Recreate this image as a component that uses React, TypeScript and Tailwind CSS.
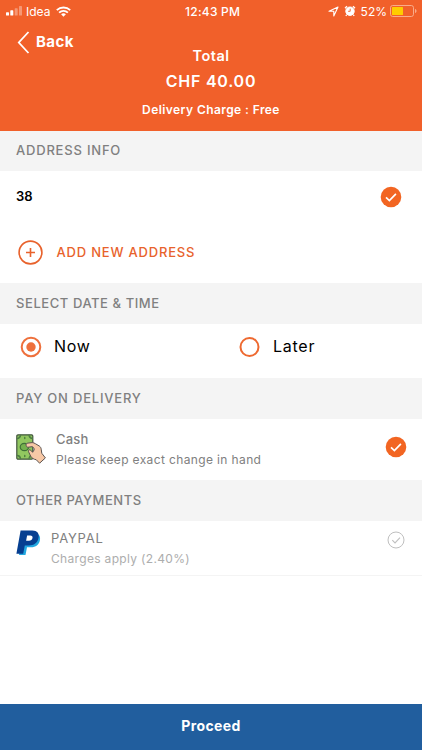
import type { ReactNode } from "react";

function SectionTitle({ children }: { children: ReactNode }) {
  return (
    <h2 className="flex h-full items-center bg-[#f4f4f4] pb-0.5 pl-4 text-[13px] leading-4 font-medium text-[#808080]">
      {children}
    </h2>
  );
}

function CheckBadge() {
  return (
    <svg width="22" height="22" viewBox="0 0 22 22" fill="none">
      <circle cx="11" cy="11" r="10.3" fill="#f26522" />
      <path d="M6 11.3l3.4 3.2 6.5-6.7" stroke="#fff" strokeWidth="1.7" />
    </svg>
  );
}

function StatusBar() {
  return (
    <div className="flex h-[22px] items-center pl-1.5 text-[12px] leading-none">
      <div className="flex w-[179px] items-center">
        <svg width="17" height="10" viewBox="0 0 17 10" fill="#fff">
          <rect x="0" y="6.2" width="3" height="3.3" rx=".6" />
          <rect x="4.3" y="4.3" width="3" height="5.2" rx=".6" />
          <rect x="8.7" y="2.3" width="3" height="7.2" rx=".6" opacity=".35" />
          <rect x="13" y="0" width="3" height="9.5" rx=".6" opacity=".35" />
        </svg>
        <span className="ml-[3px] pt-px">Idea</span>
        <svg className="ml-[6px]" width="15" height="11" viewBox="0 0 15 11" fill="none" stroke="#fff" strokeWidth="1.8">
          <path d="M.8 4.2a9.6 9.6 0 0 1 13.4 0M3.1 6.6a6.3 6.3 0 0 1 8.8 0" />
          <path d="M5.1 8.3a3.5 3.5 0 0 1 4.8 0L7.5 10.8z" fill="#fff" stroke="none" />
        </svg>
      </div>
      <span className="w-[60px] pt-px font-medium tracking-[0.25px] whitespace-nowrap">12:43 PM</span>
      <div className="ml-auto flex items-center pr-[5px]">
        <svg width="11" height="11" viewBox="0 0 11 11" fill="none" stroke="#fff" strokeWidth="1.1" strokeLinejoin="round">
          <path d="M1 5.3L10 1 5.8 10V5.3z" />
        </svg>
        <svg className="ml-[5px]" width="12" height="12" viewBox="0 0 12 12" fill="none" stroke="#fff">
          <circle cx="6" cy="6.2" r="4.2" fill="#fff" />
          <path d="M1 3.2L3 1.2M11 3.2L9 1.2M2.8 9.6l-1 1.2M9.2 9.6l1 1.2" strokeWidth="1.3" />
          <path d="M6.2 3.7v2.6H4.1" stroke="#f0602a" strokeWidth=".9" />
        </svg>
        <span className="ml-[5px] pt-px">52%</span>
        <svg className="ml-[3px]" width="27" height="12" viewBox="0 0 27 12">
          <rect x=".5" y=".5" width="23" height="11" rx="2.2" fill="none" stroke="#f9ac8a" />
          <rect x="2" y="2" width="11" height="8" rx=".5" fill="#ffcc00" />
          <path d="M25 4v4c2-.6 2-3.4 0-4z" fill="#f9ac8a" />
        </svg>
      </div>
    </div>
  );
}

function CashIcon() {
  return (
    <svg width="30" height="31" viewBox="0 0 30 31" strokeWidth="1.2" strokeLinejoin="round">
      <rect x=".8" y=".8" width="16" height="24.4" rx="1.2" fill="#91c760" stroke="#42553f" />
      <path
        d="M.8 4.6C3 4.6 4.6 3 4.6.8M13 .8c0 2.2 1.6 3.8 3.8 3.8M.8 21.4c2.2 0 3.8 1.6 3.8 3.8M13 25.2c0-2.2 1.6-3.8 3.8-3.8"
        fill="#609c4b"
        stroke="#4d7c42"
      />
      <ellipse cx="8.4" cy="13" rx="4.2" ry="3.7" fill="#75b14e" stroke="#3f7038" />
      <path d="M8.8 3.4v1.2M8.8 21.4v1.2" stroke="#3f7038" strokeLinecap="round" />
      <path
        d="M10.2 11.6c-.5-1.4.3-2.2 1.7-2.5l4.3-.5c1.2 0 2.2.5 3.2 1.1l3.9 2.3c1.2.8 1.7 1.9 1.9 3.2l.6 4.1 3.6 4.6-5.8 5.3-3.4-3.5c-2.3-.3-4.4-1.5-5.5-3.5l-2.1-4.4c-.7-1.7 1-2.7 2.2-1.5l1.8 2 1.5-2.3c.3-1.7-.6-2.9-2-3.3l-3.9.5c-1 .1-1.7-.4-2-1.6z"
        fill="#f7c8a6"
        stroke="#5b5350"
        strokeWidth="1"
      />
    </svg>
  );
}

function PaypalIcon() {
  return (
    <svg width="25" height="26" viewBox="0 0 25 26">
      <path d="M7.2 3.5h11.3c4.3 0 6.3 2.6 5.4 6.8-.9 4.7-4.1 7-8.9 7h-4l-1.5 7.6H3z" fill="#23a8e0" />
      <path d="M4.6.6h11.7c5 0 7.2 3 6.2 7.5-1 5-4.5 7.4-9.6 7.4H8.8l-1.6 8.2H.4z" fill="#063f91" />
      <path d="M11.1 5.6h3.1c1.8 0 2.7.9 2.3 2.5-.4 1.9-1.6 2.7-3.5 2.7h-2.9z" fill="#fff" />
    </svg>
  );
}

export default function App() {
  return (
    <div className="grid h-[750px] w-[422px] grid-rows-[131px_40px_112px_41px_54px_41px_61px_41px_55px_1fr_46px] overflow-hidden bg-white font-['Inter',sans-serif]">
      <header className="bg-[#f1602a] text-white">
        <StatusBar />
        <div className="flex h-[22px] items-start pt-[9px] pl-[17px]">
          <svg width="13" height="23" viewBox="0 0 13 23" fill="none" stroke="#fff" strokeWidth="1.8">
            <path d="M11.5 1L1.8 11.5 11.5 22" />
          </svg>
          <button className="ml-1.5 text-[15px] leading-[22px] font-bold tracking-[0.4px]">Back</button>
        </div>
        <div className="flex flex-col items-center">
          <span className="mt-[2px] text-[14.5px] leading-5 font-semibold tracking-[0.5px]">Total</span>
          <span className="mt-[5px] text-[16px] leading-5 font-semibold tracking-[0.75px]">CHF 40.00</span>
          <span className="mt-[11px] text-[12px] leading-4 font-semibold tracking-[0.42px]">Delivery Charge : Free</span>
        </div>
      </header>

      <SectionTitle><span className="tracking-[0.8px]">ADDRESS INFO</span></SectionTitle>
      <div>
        <div className="flex h-[52px] items-center justify-between pr-5 pl-4">
          <span className="text-[13px] font-semibold text-black">38</span>
          <CheckBadge />
        </div>
        <button className="flex h-[58px] items-center pl-[18px] text-[#e8622c]">
          <svg width="25" height="25" viewBox="0 0 25 25" fill="none" stroke="#e8622c">
            <circle cx="12.5" cy="12.5" r="11.4" strokeWidth="1.6" />
            <path d="M12.5 8v9M8 12.5h9" strokeWidth="1.6" />
          </svg>
          <span className="ml-[13.5px] pt-0.5 text-[13px] font-medium tracking-[0.8px]">ADD NEW ADDRESS</span>
        </button>
      </div>

      <SectionTitle><span className="tracking-[0.57px]">SELECT DATE & TIME</span></SectionTitle>
      <div className="flex h-[45px] items-center pl-5 text-[16px] text-black">
        <label className="flex w-[219px] items-center">
          <svg width="22" height="22" viewBox="0 0 22 22">
            <circle cx="11" cy="11" r="9.3" fill="none" stroke="#ee703c" strokeWidth="2" />
            <circle cx="11" cy="11" r="4.7" fill="#ee703c" />
          </svg>
          <span className="ml-3 pb-0.5 tracking-[0.7px]">Now</span>
        </label>
        <label className="flex items-center">
          <svg width="22" height="22" viewBox="0 0 22 22">
            <circle cx="10.5" cy="11" r="9" fill="none" stroke="#ee6930" strokeWidth="2" />
          </svg>
          <span className="ml-3 pb-0.5 tracking-[0.75px]">Later</span>
        </label>
      </div>

      <SectionTitle><span className="tracking-[0.8px]">PAY ON DELIVERY</span></SectionTitle>
      <div className="flex items-center pr-[15px] pl-4">
        <CashIcon />
        <div className="ml-2.5 flex-1 text-[#808080]">
          <p className="text-[13px] leading-5 font-medium tracking-[0.2px]">Cash</p>
          <p className="pt-px text-[12px] leading-5 tracking-[0.37px]">Please keep exact change in hand</p>
        </div>
        <div className="pb-[5px]"><CheckBadge /></div>
      </div>

      <SectionTitle><span className="tracking-[0.5px]">OTHER PAYMENTS</span></SectionTitle>
      <div className="flex items-start border-b border-[#f4f4f4] pt-[7px] pr-[17px] pl-4">
        <div className="pt-[2px]"><PaypalIcon /></div>
        <div className="ml-2.5 flex-1">
          <p className="text-[13px] leading-5 tracking-[0.8px] text-[#808080]">PAYPAL</p>
          <p className="pt-px text-[12px] leading-5 tracking-[0.33px] text-[#adadad]">Charges apply (2.40%)</p>
        </div>
        <svg className="mt-[3px]" width="18" height="18" viewBox="0 0 18 18" fill="none" stroke="#bfbfbf">
          <circle cx="9" cy="9" r="8" />
          <path d="M5.3 9.2l2.7 2.7 5-5.3" strokeWidth="1.1" />
        </svg>
      </div>

      <div />
      <button className="bg-[#215e9e] pb-[3px] text-[14px] font-bold tracking-[0.4px] text-white">Proceed</button>
    </div>
  );
}
